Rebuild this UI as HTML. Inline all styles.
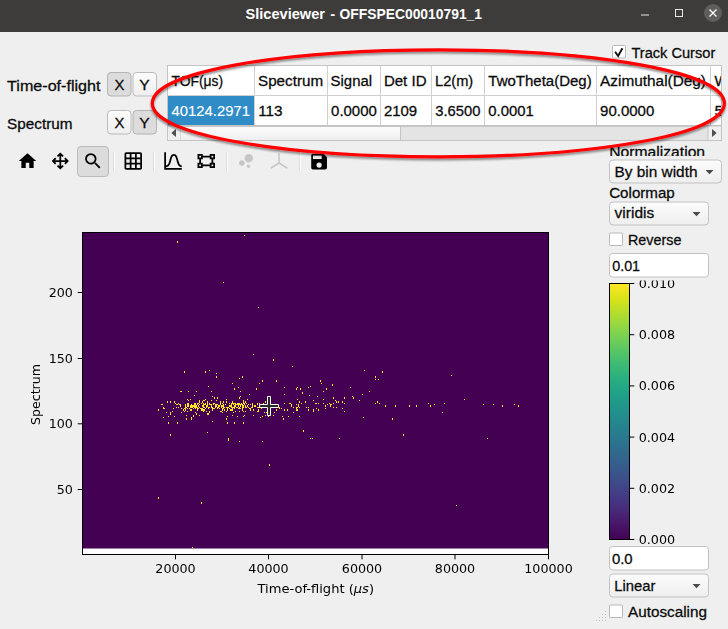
<!DOCTYPE html>
<html lang="en"><head><meta charset="utf-8"><title>Sliceviewer - OFFSPEC00010791_1</title>
<style>
html,body{margin:0;padding:0;background:#efefef;overflow:hidden}
svg{display:block;font-family:"Liberation Sans", sans-serif}
.pl{font-family:"DejaVu Sans", sans-serif}
</style></head><body>
<svg width="728" height="629" viewBox="0 0 728 629">
<defs>
<linearGradient id="vir" x1="0" y1="1" x2="0" y2="0">
<stop offset="0.0000" stop-color="#440154"/>
<stop offset="0.0625" stop-color="#48186a"/>
<stop offset="0.1250" stop-color="#472d7b"/>
<stop offset="0.1875" stop-color="#424086"/>
<stop offset="0.2500" stop-color="#3b528b"/>
<stop offset="0.3125" stop-color="#33638d"/>
<stop offset="0.3750" stop-color="#2c728e"/>
<stop offset="0.4375" stop-color="#26828e"/>
<stop offset="0.5000" stop-color="#21918c"/>
<stop offset="0.5625" stop-color="#1fa088"/>
<stop offset="0.6250" stop-color="#28ae80"/>
<stop offset="0.6875" stop-color="#3fbc73"/>
<stop offset="0.7500" stop-color="#5ec962"/>
<stop offset="0.8125" stop-color="#84d44b"/>
<stop offset="0.8750" stop-color="#addc30"/>
<stop offset="0.9375" stop-color="#d8e219"/>
<stop offset="1.0000" stop-color="#fde725"/>
</linearGradient>
<linearGradient id="btn" x1="0" y1="0" x2="0" y2="1"><stop offset="0" stop-color="#fcfcfc"/><stop offset="1" stop-color="#eeeeee"/></linearGradient>
<filter id="sh" x="-5%" y="-20%" width="110%" height="140%"><feGaussianBlur in="SourceAlpha" stdDeviation="1.2"/><feOffset dx="0" dy="1.5" result="b"/><feComponentTransfer><feFuncA type="linear" slope="0.45"/></feComponentTransfer><feMerge><feMergeNode/><feMergeNode in="SourceGraphic"/></feMerge></filter>
</defs>
<rect width="728" height="629" fill="#efefef"/>
<g id="titlebar">
<rect width="728" height="32" fill="#3d3c3a"/>
<text y="19" font-size="14.67" font-weight="bold" fill="#ffffff"><tspan x="245.5" textLength="79.5" lengthAdjust="spacingAndGlyphs">Sliceviewer</tspan> <tspan x="330.2">-</tspan> <tspan x="339.5" textLength="142.5" lengthAdjust="spacingAndGlyphs">OFFSPEC00010791_1</tspan></text>
<rect x="641" y="14.5" width="8" height="1" fill="#e6e6e6"/>
<rect x="675.5" y="9.5" width="7" height="7" fill="none" stroke="#e6e6e6" stroke-width="1"/>
<circle cx="713" cy="13" r="9" fill="#5f5e5c"/>
<path d="M709.5 9.5 L716.5 16.5 M716.5 9.5 L709.5 16.5" stroke="#ffffff" stroke-width="1.4" fill="none"/>
</g>
<g id="dims">
<text x="7.1" y="90.8" font-size="14.67" fill="#0a0a0a" textLength="93.4" lengthAdjust="spacingAndGlyphs" stroke="#0a0a0a" stroke-width="0.27" >Time-of-flight</text>
<text x="7.1" y="129" font-size="14.67" fill="#0a0a0a" textLength="65.4" lengthAdjust="spacingAndGlyphs" stroke="#0a0a0a" stroke-width="0.27" >Spectrum</text>
<rect x="107.5" y="72.5" width="23.5" height="23.5" rx="3.5" fill="#dcdcdc" stroke="#b4b4b4"/>
<text x="114.6" y="90" font-size="14.67" fill="#0a0a0a" textLength="9.9" lengthAdjust="spacingAndGlyphs" stroke="#0a0a0a" stroke-width="0.27" >X</text>
<rect x="133.0" y="72.5" width="23.5" height="23.5" rx="3.5" fill="url(#btn)" stroke="#bcbcbc"/>
<text x="139.35" y="90" font-size="14.67" fill="#0a0a0a" textLength="10.4" lengthAdjust="spacingAndGlyphs" stroke="#0a0a0a" stroke-width="0.27" >Y</text>
<rect x="107.5" y="110.5" width="23.5" height="23.5" rx="3.5" fill="url(#btn)" stroke="#bcbcbc"/>
<text x="114.6" y="128" font-size="14.67" fill="#0a0a0a" textLength="9.9" lengthAdjust="spacingAndGlyphs" stroke="#0a0a0a" stroke-width="0.27" >X</text>
<rect x="133.0" y="110.5" width="23.5" height="23.5" rx="3.5" fill="#dcdcdc" stroke="#b4b4b4"/>
<text x="139.35" y="128" font-size="14.67" fill="#0a0a0a" textLength="10.4" lengthAdjust="spacingAndGlyphs" stroke="#0a0a0a" stroke-width="0.27" >Y</text>
</g>
<g id="table">
<rect x="167.5" y="65.5" width="554" height="75" fill="#ffffff" stroke="#c4c4c4"/>
<rect x="168" y="96" width="86" height="29" fill="#308cc6"/>
<rect x="254" y="66" width="1" height="59.5" fill="#d0d0d0"/>
<rect x="327" y="66" width="1" height="59.5" fill="#d0d0d0"/>
<rect x="380" y="66" width="1" height="59.5" fill="#d0d0d0"/>
<rect x="431" y="66" width="1" height="59.5" fill="#d0d0d0"/>
<rect x="484" y="66" width="1" height="59.5" fill="#d0d0d0"/>
<rect x="596" y="66" width="1" height="59.5" fill="#d0d0d0"/>
<rect x="710" y="66" width="1" height="59.5" fill="#d0d0d0"/>
<rect x="168" y="95" width="553" height="1" fill="#d0d0d0"/>
<rect x="168" y="125" width="553" height="1" fill="#c4c4c4"/>
<rect x="168" y="126" width="553" height="14" fill="#e4e4e4"/>
<rect x="168" y="126" width="553" height="1" fill="#c8c8c8"/>
<rect x="180.5" y="126.5" width="220" height="14" fill="url(#btn)" stroke="#c4c4c4" stroke-width="1"/>
<rect x="168" y="126.5" width="12.5" height="13.5" fill="#efefef"/>
<rect x="708" y="126.5" width="13" height="13.5" fill="#efefef"/><rect x="707.5" y="126.5" width="1" height="13.5" fill="#c8c8c8"/>
<path d="M171.3 133 L176 129 L176 137 Z" fill="#4e4e4e"/>
<path d="M716.7 133 L712 129 L712 137 Z" fill="#4e4e4e"/>
<text x="171.6" y="86" font-size="14.67" fill="#0a0a0a" textLength="51.5" lengthAdjust="spacingAndGlyphs" stroke="#0a0a0a" stroke-width="0.27" >TOF(μs)</text>
<text x="258.0" y="86" font-size="14.67" fill="#0a0a0a" textLength="65.1" lengthAdjust="spacingAndGlyphs" stroke="#0a0a0a" stroke-width="0.27" >Spectrum</text>
<text x="330.6" y="86" font-size="14.67" fill="#0a0a0a" textLength="41.5" lengthAdjust="spacingAndGlyphs" stroke="#0a0a0a" stroke-width="0.27" >Signal</text>
<text x="383.9" y="86" font-size="14.67" fill="#0a0a0a" textLength="42.6" lengthAdjust="spacingAndGlyphs" stroke="#0a0a0a" stroke-width="0.27" >Det ID</text>
<text x="435.0" y="86" font-size="14.67" fill="#0a0a0a" textLength="38.2" lengthAdjust="spacingAndGlyphs" stroke="#0a0a0a" stroke-width="0.27" >L2(m)</text>
<text x="488.3" y="86" font-size="14.67" fill="#0a0a0a" textLength="103.4" lengthAdjust="spacingAndGlyphs" stroke="#0a0a0a" stroke-width="0.27" >TwoTheta(Deg)</text>
<text x="600.1" y="86" font-size="14.67" fill="#0a0a0a" textLength="105.9" lengthAdjust="spacingAndGlyphs" stroke="#0a0a0a" stroke-width="0.27" >Azimuthal(Deg)</text>
<clipPath id="tclip"><rect x="168" y="66" width="553" height="60"/></clipPath>
<g clip-path="url(#tclip)">
<text x="714.4" y="86" font-size="14.67" fill="#0a0a0a" textLength="13.9" lengthAdjust="spacingAndGlyphs" stroke="#0a0a0a" stroke-width="0.27" >W</text>
<text x="714.4" y="116" font-size="14.67" fill="#0a0a0a" textLength="8.9" lengthAdjust="spacingAndGlyphs" stroke="#0a0a0a" stroke-width="0.27" >5</text>
</g>
<text x="171.6" y="116" font-size="14.67" fill="#ffffff" textLength="78.4" lengthAdjust="spacingAndGlyphs" stroke="#ffffff" stroke-width="0.12" >40124.2971</text>
<text x="258.2" y="116" font-size="14.67" fill="#0a0a0a" textLength="24.3" lengthAdjust="spacingAndGlyphs" stroke="#0a0a0a" stroke-width="0.27" >113</text>
<text x="331.1" y="116" font-size="14.67" fill="#0a0a0a" textLength="45.7" lengthAdjust="spacingAndGlyphs" stroke="#0a0a0a" stroke-width="0.27" >0.0000</text>
<text x="383.9" y="116" font-size="14.67" fill="#0a0a0a" textLength="33.3" lengthAdjust="spacingAndGlyphs" stroke="#0a0a0a" stroke-width="0.27" >2109</text>
<text x="435.3" y="116" font-size="14.67" fill="#0a0a0a" textLength="45.1" lengthAdjust="spacingAndGlyphs" stroke="#0a0a0a" stroke-width="0.27" >3.6500</text>
<text x="488.3" y="116" font-size="14.67" fill="#0a0a0a" textLength="45.5" lengthAdjust="spacingAndGlyphs" stroke="#0a0a0a" stroke-width="0.27" >0.0001</text>
<text x="600.1" y="116" font-size="14.67" fill="#0a0a0a" textLength="54.2" lengthAdjust="spacingAndGlyphs" stroke="#0a0a0a" stroke-width="0.27" >90.0000</text>
</g>
<g id="track">
<rect x="612.5" y="45.5" width="13.0" height="12.5" rx="1" fill="#ffffff" stroke="#b9b9b9"/>
<path d="M615.1 51.8 L618.1 56.0 L622.4 48.2" fill="none" stroke="#111111" stroke-width="1.9"/>
<text x="631.4" y="57.5" font-size="14.67" fill="#0a0a0a" textLength="83.9" lengthAdjust="spacingAndGlyphs" stroke="#0a0a0a" stroke-width="0.27" >Track Cursor</text>
</g>
<g id="toolbar">
<rect x="77.5" y="146.5" width="31" height="30" rx="3.5" fill="#dcdcdc" stroke="#bcbcbc"/>
<rect x="113" y="152" width="1" height="19" fill="#dedede"/><rect x="114" y="152" width="1" height="19" fill="#fdfdfd"/>
<rect x="153" y="152" width="1" height="19" fill="#dedede"/><rect x="154" y="152" width="1" height="19" fill="#fdfdfd"/>
<rect x="226" y="152" width="1" height="19" fill="#dedede"/><rect x="227" y="152" width="1" height="19" fill="#fdfdfd"/>
<rect x="299" y="152" width="1" height="19" fill="#dedede"/><rect x="300" y="152" width="1" height="19" fill="#fdfdfd"/>
<path transform="translate(17.00 150.50) scale(0.875)" fill="#000000" d="M10 20v-6h4v6h5v-8h3L12 3 2 12h3v8z"/>
<path transform="translate(49.80 150.50) scale(0.875)" fill="#000000" d="M13,11H18L16.5,9.5L17.92,8.08L21.84,12L17.92,15.92L16.5,14.5L18,13H13V18L14.5,16.5L15.92,17.92L12,21.84L8.08,17.92L9.5,16.5L11,18V13H6L7.5,14.5L6.08,15.92L2.16,12L6.08,8.08L7.5,9.5L6,11H11V6L9.5,7.5L8.08,6.08L12,2.16L15.92,6.08L14.5,7.5L13,6V11Z"/>
<path transform="translate(82.50 150.50) scale(0.875)" fill="#000000" d="M9.5,3A6.5,6.5 0 0,1 16,9.5C16,11.11 15.41,12.59 14.44,13.73L14.71,14H15.5L20.5,19L19,20.5L14,15.5V14.71L13.73,14.44C12.59,15.41 11.11,16 9.5,16A6.5,6.5 0 0,1 3,9.5A6.5,6.5 0 0,1 9.5,3M9.5,5C7,5 5,7 5,9.5C5,12 7,14 9.5,14C12,14 14,12 14,9.5C14,7 12,5 9.5,5Z"/>
<path transform="translate(122.75 150.50) scale(0.875)" fill="#000000" d="M10,4V8H14V4H10M16,4V8H20V4H16M16,10V14H20V10H16M16,16V20H20V16H16M14,20V16H10V20H14M8,20V16H4V20H8M8,14V10H4V14H8M8,8V4H4V8H8M10,14H14V10H10V14M4,2H20A2,2 0 0,1 22,4V20A2,2 0 0,1 20,22H4C2.92,22 2,21.1 2,20V4A2,2 0 0,1 4,2Z"/>
<path transform="translate(162.50 150.50) scale(0.875)" fill="#000000" d="M9.96,11.31C10.82,8.1 11.5,6 13,6C14.5,6 15.18,8.1 16.04,11.31C17,14.92 18.1,19 22,19V17C19.8,17 19,14.54 17.97,10.8C17.08,7.46 16.15,4 13,4C9.85,4 8.92,7.46 8.03,10.8C7.03,14.54 6.2,17 4,17V2H2V22H22V20H4V19C7.9,19 9,14.92 9.96,11.31Z"/>
<path transform="translate(195.75 150.50) scale(0.875)" fill="#000000" d="M2,4H8V6H16V4H22V10H20V14H22V20H16V18H8V20H2V14H4V10H2V4M16,10V8H8V10H6V14H8V16H16V14H18V10H16M4,6V8H6V6H4M18,6V8H20V6H18M4,16V18H6V16H4M18,16V18H20V16H18Z"/>
<path transform="translate(235.50 150.50) scale(0.875)" fill="#c6c6c6" d="M7.2,11.2C8.97,11.2 10.4,12.63 10.4,14.4C10.4,16.17 8.97,17.6 7.2,17.6C5.43,17.6 4,16.17 4,14.4C4,12.63 5.43,11.2 7.2,11.2M14.8,16A2,2 0 0,1 16.8,18A2,2 0 0,1 14.8,20A2,2 0 0,1 12.8,18A2,2 0 0,1 14.8,16M15.2,4A4.8,4.8 0 0,1 20,8.8C20,11.45 17.85,13.6 15.2,13.6A4.8,4.8 0 0,1 10.4,8.8C10.4,6.15 12.55,4 15.2,4Z"/>
<path d="M279 153 L279 163 M279 163 L270.7 168.2 M279 163 L287.3 168.2" stroke="#c8c8c8" stroke-width="1.6" fill="none"/>
<path transform="translate(308.60 151.00) scale(0.875)" fill="#000000" d="M15,9H5V5H15M12,19A3,3 0 0,1 9,16A3,3 0 0,1 12,13A3,3 0 0,1 15,16A3,3 0 0,1 12,19M17,3H5C3.89,3 3,3.9 3,5V19A2,2 0 0,0 5,21H19A2,2 0 0,0 21,19V7L17,3Z"/>
</g>
<g id="plot" class="pl" style="opacity:.999">
<rect x="82" y="232" width="467" height="323" fill="#ffffff"/>
<rect x="83" y="233" width="465" height="315.5" fill="#440154"/>
<path fill="#fde725" shape-rendering="crispEdges" d="M158 497.24h1v1.31h-1zM158 409.29h1v1.31h-1zM161 404.04h1v1.31h-1zM162 404.04h1v1.31h-1zM163 417.17h1v1.31h-1zM163 407.98h1v1.31h-1zM163 406.66h1v1.31h-1zM164 407.98h1v1.31h-1zM166 411.92h1v1.31h-1zM167 401.41h1v1.31h-1zM168 422.42h1v1.31h-1zM168 415.85h1v1.31h-1zM170 434.23h1v1.31h-1zM170 413.23h1v1.31h-1zM170 411.92h1v1.31h-1zM170 401.41h1v1.31h-1zM172 410.60h1v1.31h-1zM173 407.98h1v1.31h-1zM174 415.85h1v1.31h-1zM174 401.41h1v1.31h-1zM175 402.73h1v1.31h-1zM176 406.66h1v1.31h-1zM176 404.04h1v1.31h-1zM177 422.42h1v1.31h-1zM177 404.04h1v1.31h-1zM177 241.26h1v1.31h-1zM178 406.66h1v1.31h-1zM178 402.73h1v1.31h-1zM179 404.04h1v1.31h-1zM180 405.35h1v1.31h-1zM180 404.04h1v1.31h-1zM180 390.91h1v1.31h-1zM181 411.92h1v1.31h-1zM181 407.98h1v1.31h-1zM181 390.91h1v1.31h-1zM183 409.29h1v1.31h-1zM184 410.60h1v1.31h-1zM184 407.98h1v1.31h-1zM184 371.22h1v1.31h-1zM185 409.29h1v1.31h-1zM185 407.98h1v1.31h-1zM185 406.66h1v1.31h-1zM185 405.35h1v1.31h-1zM185 404.04h1v1.31h-1zM186 418.48h1v1.31h-1zM186 414.54h1v1.31h-1zM186 406.66h1v1.31h-1zM187 410.60h1v1.31h-1zM187 407.98h1v1.31h-1zM187 405.35h1v1.31h-1zM187 404.04h1v1.31h-1zM187 402.73h1v1.31h-1zM187 398.79h1v1.31h-1zM188 405.35h1v1.31h-1zM188 404.04h1v1.31h-1zM188 402.73h1v1.31h-1zM188 400.10h1v1.31h-1zM188 390.91h1v1.31h-1zM189 407.98h1v1.31h-1zM190 409.29h1v1.31h-1zM190 406.66h1v1.31h-1zM190 405.35h1v1.31h-1zM190 398.79h1v1.31h-1zM191 418.48h1v1.31h-1zM191 417.17h1v1.31h-1zM191 409.29h1v1.31h-1zM191 406.66h1v1.31h-1zM191 405.35h1v1.31h-1zM191 404.04h1v1.31h-1zM192 547.12h1v1.31h-1zM192 406.66h1v1.31h-1zM192 405.35h1v1.31h-1zM193 415.85h1v1.31h-1zM193 414.54h1v1.31h-1zM193 407.98h1v1.31h-1zM193 405.35h1v1.31h-1zM194 406.66h1v1.31h-1zM194 405.35h1v1.31h-1zM194 404.04h1v1.31h-1zM194 402.73h1v1.31h-1zM194 394.85h1v1.31h-1zM195 411.92h1v1.31h-1zM195 407.98h1v1.31h-1zM195 406.66h1v1.31h-1zM195 405.35h1v1.31h-1zM195 404.04h1v1.31h-1zM195 402.73h1v1.31h-1zM196 413.23h1v1.31h-1zM196 406.66h1v1.31h-1zM196 405.35h1v1.31h-1zM196 390.91h1v1.31h-1zM197 409.29h1v1.31h-1zM197 407.98h1v1.31h-1zM197 406.66h1v1.31h-1zM197 404.04h1v1.31h-1zM197 402.73h1v1.31h-1zM198 407.98h1v1.31h-1zM198 405.35h1v1.31h-1zM198 402.73h1v1.31h-1zM199 414.54h1v1.31h-1zM199 406.66h1v1.31h-1zM199 404.04h1v1.31h-1zM199 401.41h1v1.31h-1zM199 400.10h1v1.31h-1zM200 407.98h1v1.31h-1zM201 502.49h1v1.31h-1zM201 409.29h1v1.31h-1zM201 407.98h1v1.31h-1zM201 402.73h1v1.31h-1zM202 409.29h1v1.31h-1zM202 407.98h1v1.31h-1zM202 405.35h1v1.31h-1zM202 401.41h1v1.31h-1zM203 410.60h1v1.31h-1zM203 409.29h1v1.31h-1zM203 406.66h1v1.31h-1zM203 405.35h1v1.31h-1zM203 404.04h1v1.31h-1zM203 402.73h1v1.31h-1zM203 400.10h1v1.31h-1zM204 409.29h1v1.31h-1zM204 406.66h1v1.31h-1zM204 404.04h1v1.31h-1zM204 400.10h1v1.31h-1zM205 407.98h1v1.31h-1zM205 404.04h1v1.31h-1zM205 402.73h1v1.31h-1zM205 398.79h1v1.31h-1zM205 371.22h1v1.31h-1zM206 410.60h1v1.31h-1zM206 406.66h1v1.31h-1zM206 405.35h1v1.31h-1zM207 431.61h1v1.31h-1zM207 413.23h1v1.31h-1zM207 405.35h1v1.31h-1zM207 404.04h1v1.31h-1zM207 402.73h1v1.31h-1zM207 401.41h1v1.31h-1zM208 413.23h1v1.31h-1zM208 407.98h1v1.31h-1zM208 406.66h1v1.31h-1zM208 385.66h1v1.31h-1zM209 411.92h1v1.31h-1zM209 410.60h1v1.31h-1zM209 406.66h1v1.31h-1zM209 404.04h1v1.31h-1zM209 402.73h1v1.31h-1zM209 369.91h1v1.31h-1zM210 404.04h1v1.31h-1zM211 406.66h1v1.31h-1zM211 405.35h1v1.31h-1zM211 404.04h1v1.31h-1zM211 400.10h1v1.31h-1zM211 390.91h1v1.31h-1zM212 421.10h1v1.31h-1zM212 409.29h1v1.31h-1zM212 407.98h1v1.31h-1zM212 406.66h1v1.31h-1zM212 396.16h1v1.31h-1zM213 407.98h1v1.31h-1zM213 404.04h1v1.31h-1zM213 402.73h1v1.31h-1zM214 407.98h1v1.31h-1zM214 402.73h1v1.31h-1zM214 397.48h1v1.31h-1zM215 406.66h1v1.31h-1zM215 405.35h1v1.31h-1zM215 404.04h1v1.31h-1zM216 405.35h1v1.31h-1zM216 404.04h1v1.31h-1zM216 400.10h1v1.31h-1zM216 376.47h1v1.31h-1zM216 372.53h1v1.31h-1zM217 407.98h1v1.31h-1zM217 406.66h1v1.31h-1zM217 404.04h1v1.31h-1zM217 397.48h1v1.31h-1zM218 406.66h1v1.31h-1zM218 405.35h1v1.31h-1zM219 407.98h1v1.31h-1zM219 405.35h1v1.31h-1zM220 410.60h1v1.31h-1zM220 404.04h1v1.31h-1zM220 402.73h1v1.31h-1zM220 401.41h1v1.31h-1zM221 410.60h1v1.31h-1zM221 406.66h1v1.31h-1zM221 405.35h1v1.31h-1zM222 411.92h1v1.31h-1zM222 409.29h1v1.31h-1zM222 407.98h1v1.31h-1zM222 405.35h1v1.31h-1zM222 402.73h1v1.31h-1zM223 407.98h1v1.31h-1zM223 406.66h1v1.31h-1zM223 405.35h1v1.31h-1zM223 404.04h1v1.31h-1zM223 401.41h1v1.31h-1zM223 281.96h1v1.31h-1zM224 409.29h1v1.31h-1zM224 406.66h1v1.31h-1zM225 404.04h1v1.31h-1zM226 418.48h1v1.31h-1zM226 410.60h1v1.31h-1zM226 406.66h1v1.31h-1zM226 401.41h1v1.31h-1zM226 398.79h1v1.31h-1zM227 422.42h1v1.31h-1zM227 415.85h1v1.31h-1zM227 409.29h1v1.31h-1zM227 407.98h1v1.31h-1zM227 406.66h1v1.31h-1zM228 439.48h1v1.31h-1zM228 438.17h1v1.31h-1zM228 406.66h1v1.31h-1zM229 407.98h1v1.31h-1zM229 405.35h1v1.31h-1zM229 402.73h1v1.31h-1zM230 409.29h1v1.31h-1zM230 405.35h1v1.31h-1zM231 409.29h1v1.31h-1zM231 406.66h1v1.31h-1zM231 405.35h1v1.31h-1zM231 404.04h1v1.31h-1zM231 402.73h1v1.31h-1zM232 414.54h1v1.31h-1zM232 409.29h1v1.31h-1zM232 407.98h1v1.31h-1zM232 406.66h1v1.31h-1zM232 402.73h1v1.31h-1zM232 401.41h1v1.31h-1zM232 383.04h1v1.31h-1zM233 411.92h1v1.31h-1zM233 406.66h1v1.31h-1zM233 404.04h1v1.31h-1zM233 402.73h1v1.31h-1zM234 422.42h1v1.31h-1zM234 407.98h1v1.31h-1zM234 406.66h1v1.31h-1zM234 405.35h1v1.31h-1zM234 402.73h1v1.31h-1zM234 388.29h1v1.31h-1zM235 410.60h1v1.31h-1zM235 405.35h1v1.31h-1zM235 404.04h1v1.31h-1zM235 402.73h1v1.31h-1zM236 406.66h1v1.31h-1zM236 404.04h1v1.31h-1zM237 415.85h1v1.31h-1zM237 406.66h1v1.31h-1zM237 404.04h1v1.31h-1zM237 402.73h1v1.31h-1zM238 407.98h1v1.31h-1zM238 405.35h1v1.31h-1zM238 404.04h1v1.31h-1zM238 402.73h1v1.31h-1zM238 386.97h1v1.31h-1zM239 440.80h1v1.31h-1zM239 410.60h1v1.31h-1zM239 407.98h1v1.31h-1zM239 406.66h1v1.31h-1zM239 404.04h1v1.31h-1zM239 402.73h1v1.31h-1zM239 397.48h1v1.31h-1zM239 377.79h1v1.31h-1zM240 407.98h1v1.31h-1zM240 405.35h1v1.31h-1zM240 404.04h1v1.31h-1zM240 396.16h1v1.31h-1zM240 390.91h1v1.31h-1zM241 404.04h1v1.31h-1zM241 402.73h1v1.31h-1zM242 409.29h1v1.31h-1zM242 407.98h1v1.31h-1zM242 406.66h1v1.31h-1zM242 405.35h1v1.31h-1zM242 404.04h1v1.31h-1zM242 376.47h1v1.31h-1zM243 422.42h1v1.31h-1zM243 415.85h1v1.31h-1zM243 410.60h1v1.31h-1zM243 406.66h1v1.31h-1zM243 405.35h1v1.31h-1zM243 402.73h1v1.31h-1zM243 401.41h1v1.31h-1zM243 400.10h1v1.31h-1zM244 414.54h1v1.31h-1zM244 404.04h1v1.31h-1zM244 402.73h1v1.31h-1zM244 234.70h1v1.31h-1zM245 410.60h1v1.31h-1zM245 406.66h1v1.31h-1zM245 405.35h1v1.31h-1zM245 401.41h1v1.31h-1zM246 406.66h1v1.31h-1zM246 402.73h1v1.31h-1zM247 405.35h1v1.31h-1zM247 398.79h1v1.31h-1zM248 406.66h1v1.31h-1zM248 404.04h1v1.31h-1zM249 407.98h1v1.31h-1zM249 393.54h1v1.31h-1zM250 409.29h1v1.31h-1zM250 407.98h1v1.31h-1zM250 404.04h1v1.31h-1zM251 406.66h1v1.31h-1zM252 406.66h1v1.31h-1zM252 405.35h1v1.31h-1zM252 404.04h1v1.31h-1zM252 402.73h1v1.31h-1zM253 414.54h1v1.31h-1zM253 409.29h1v1.31h-1zM253 354.16h1v1.31h-1zM254 405.35h1v1.31h-1zM255 405.35h1v1.31h-1zM256 388.29h1v1.31h-1zM257 410.60h1v1.31h-1zM257 406.66h1v1.31h-1zM257 404.04h1v1.31h-1zM257 402.73h1v1.31h-1zM258 410.60h1v1.31h-1zM258 409.29h1v1.31h-1zM258 406.66h1v1.31h-1zM258 306.90h1v1.31h-1zM259 406.66h1v1.31h-1zM259 402.73h1v1.31h-1zM259 383.04h1v1.31h-1zM260 417.17h1v1.31h-1zM261 407.98h1v1.31h-1zM261 405.35h1v1.31h-1zM262 440.80h1v1.31h-1zM262 415.85h1v1.31h-1zM262 406.66h1v1.31h-1zM262 380.41h1v1.31h-1zM263 405.35h1v1.31h-1zM263 404.04h1v1.31h-1zM263 402.73h1v1.31h-1zM264 411.92h1v1.31h-1zM265 414.54h1v1.31h-1zM265 401.41h1v1.31h-1zM266 411.92h1v1.31h-1zM267 398.79h1v1.31h-1zM268 415.85h1v1.31h-1zM268 406.66h1v1.31h-1zM269 464.42h1v1.31h-1zM269 404.04h1v1.31h-1zM269 401.41h1v1.31h-1zM269 398.79h1v1.31h-1zM270 407.98h1v1.31h-1zM270 404.04h1v1.31h-1zM270 401.41h1v1.31h-1zM270 398.79h1v1.31h-1zM273 414.54h1v1.31h-1zM273 359.41h1v1.31h-1zM274 411.92h1v1.31h-1zM276 409.29h1v1.31h-1zM276 404.04h1v1.31h-1zM276 380.41h1v1.31h-1zM277 404.04h1v1.31h-1zM279 407.98h1v1.31h-1zM279 406.66h1v1.31h-1zM281 407.98h1v1.31h-1zM282 415.85h1v1.31h-1zM283 418.48h1v1.31h-1zM284 409.29h1v1.31h-1zM284 402.73h1v1.31h-1zM284 393.54h1v1.31h-1zM284 386.97h1v1.31h-1zM287 409.29h1v1.31h-1zM288 415.85h1v1.31h-1zM289 402.73h1v1.31h-1zM290 402.73h1v1.31h-1zM291 405.35h1v1.31h-1zM291 404.04h1v1.31h-1zM292 365.97h1v1.31h-1zM293 411.92h1v1.31h-1zM293 406.66h1v1.31h-1zM296 409.29h1v1.31h-1zM296 407.98h1v1.31h-1zM296 406.66h1v1.31h-1zM296 404.04h1v1.31h-1zM296 388.29h1v1.31h-1zM297 409.29h1v1.31h-1zM297 406.66h1v1.31h-1zM297 398.79h1v1.31h-1zM297 386.97h1v1.31h-1zM298 405.35h1v1.31h-1zM298 404.04h1v1.31h-1zM299 415.85h1v1.31h-1zM299 406.66h1v1.31h-1zM299 401.41h1v1.31h-1zM300 388.29h1v1.31h-1zM301 402.73h1v1.31h-1zM302 392.23h1v1.31h-1zM303 430.29h1v1.31h-1zM305 401.41h1v1.31h-1zM306 406.66h1v1.31h-1zM308 409.29h1v1.31h-1zM308 406.66h1v1.31h-1zM308 386.97h1v1.31h-1zM309 394.85h1v1.31h-1zM310 438.17h1v1.31h-1zM310 385.66h1v1.31h-1zM312 438.17h1v1.31h-1zM313 410.60h1v1.31h-1zM313 409.29h1v1.31h-1zM313 400.10h1v1.31h-1zM315 402.73h1v1.31h-1zM316 407.98h1v1.31h-1zM316 402.73h1v1.31h-1zM317 396.16h1v1.31h-1zM318 409.29h1v1.31h-1zM318 402.73h1v1.31h-1zM320 380.41h1v1.31h-1zM321 383.04h1v1.31h-1zM323 402.73h1v1.31h-1zM323 398.79h1v1.31h-1zM323 390.91h1v1.31h-1zM325 407.98h1v1.31h-1zM325 405.35h1v1.31h-1zM326 388.29h1v1.31h-1zM327 404.04h1v1.31h-1zM329 402.73h1v1.31h-1zM330 405.35h1v1.31h-1zM330 404.04h1v1.31h-1zM331 404.04h1v1.31h-1zM332 384.35h1v1.31h-1zM333 406.66h1v1.31h-1zM333 402.73h1v1.31h-1zM333 397.48h1v1.31h-1zM335 400.10h1v1.31h-1zM336 406.66h1v1.31h-1zM336 401.41h1v1.31h-1zM338 401.41h1v1.31h-1zM339 438.17h1v1.31h-1zM342 407.98h1v1.31h-1zM342 401.41h1v1.31h-1zM344 410.60h1v1.31h-1zM344 402.73h1v1.31h-1zM344 397.48h1v1.31h-1zM350 386.97h1v1.31h-1zM352 396.16h1v1.31h-1zM353 397.48h1v1.31h-1zM359 400.10h1v1.31h-1zM362 393.54h1v1.31h-1zM363 417.17h1v1.31h-1zM364 369.91h1v1.31h-1zM369 390.91h1v1.31h-1zM375 402.73h1v1.31h-1zM375 379.10h1v1.31h-1zM375 376.47h1v1.31h-1zM377 401.41h1v1.31h-1zM378 379.10h1v1.31h-1zM379 402.73h1v1.31h-1zM382 371.22h1v1.31h-1zM385 405.35h1v1.31h-1zM392 418.48h1v1.31h-1zM395 405.35h1v1.31h-1zM403 434.23h1v1.31h-1zM409 405.35h1v1.31h-1zM416 405.35h1v1.31h-1zM428 402.73h1v1.31h-1zM430 405.35h1v1.31h-1zM434 404.04h1v1.31h-1zM442 411.92h1v1.31h-1zM444 402.73h1v1.31h-1zM451 375.16h1v1.31h-1zM456 505.12h1v1.31h-1zM464 398.79h1v1.31h-1zM483 404.04h1v1.31h-1zM487 438.17h1v1.31h-1zM493 404.04h1v1.31h-1zM502 405.35h1v1.31h-1zM514 404.04h1v1.31h-1zM518 405.35h1v1.31h-1z"/>
<path d="M259.5 404.5h8v-8h3v8h8v3h-8v8h-3v-8h-8z" fill="#2a2a2a" stroke="#ffffff" stroke-width="1"/>
<rect x="82.5" y="232.5" width="466" height="322" fill="none" stroke="#000000" stroke-width="1"/>
<rect x="175.0" y="555" width="1" height="4.3" fill="#000"/>
<text x="175.5" y="573" font-size="12.7" fill="#000" text-anchor="middle" >20000</text>
<rect x="268.0" y="555" width="1" height="4.3" fill="#000"/>
<text x="268.5" y="573" font-size="12.7" fill="#000" text-anchor="middle" >40000</text>
<rect x="361.5" y="555" width="1" height="4.3" fill="#000"/>
<text x="362" y="573" font-size="12.7" fill="#000" text-anchor="middle" >60000</text>
<rect x="454.5" y="555" width="1" height="4.3" fill="#000"/>
<text x="455" y="573" font-size="12.7" fill="#000" text-anchor="middle" >80000</text>
<rect x="548.0" y="555" width="1" height="4.3" fill="#000"/>
<text x="548.5" y="573" font-size="12.7" fill="#000" text-anchor="middle" >100000</text>
<rect x="77.7" y="489.0" width="4.3" height="1" fill="#000"/>
<text x="72.9" y="494.1" font-size="12.7" fill="#000" text-anchor="end" >50</text>
<rect x="77.7" y="423.3" width="4.3" height="1" fill="#000"/>
<text x="72.9" y="428.40000000000003" font-size="12.7" fill="#000" text-anchor="end" >100</text>
<rect x="77.7" y="358.0" width="4.3" height="1" fill="#000"/>
<text x="72.9" y="363.1" font-size="12.7" fill="#000" text-anchor="end" >150</text>
<rect x="77.7" y="292.0" width="4.3" height="1" fill="#000"/>
<text x="72.9" y="297.1" font-size="12.7" fill="#000" text-anchor="end" >200</text>
<text x="315.75" y="593" font-size="12.7" fill="#000" text-anchor="middle" textLength="116.5" lengthAdjust="spacingAndGlyphs">Time-of-flight (<tspan font-style="italic">μs</tspan>)</text>
<text transform="translate(40.3 394.5) rotate(-90)" font-size="12.7" fill="#000" text-anchor="middle" textLength="61" lengthAdjust="spacingAndGlyphs">Spectrum</text>
</g>
<g id="panel">
<clipPath id="nclip"><rect x="600" y="140" width="128" height="15.9"/></clipPath><g clip-path="url(#nclip)">
<text x="609.2" y="157.2" font-size="14.67" fill="#0a0a0a" textLength="95.9" lengthAdjust="spacingAndGlyphs" stroke="#0a0a0a" stroke-width="0.27" >Normalization</text>
</g>
<rect x="609.5" y="160.0" width="112" height="23" rx="3.5" fill="url(#btn)" stroke="#c2c2c2"/>
<text x="614.6" y="177" font-size="14.67" fill="#0a0a0a" textLength="82.9" lengthAdjust="spacingAndGlyphs" stroke="#0a0a0a" stroke-width="0.27" >By bin width</text>
<path d="M705.5 170.0 L713.5 170.0 L709.5 174.2 Z" fill="#4a4a4a"/>
<text x="609.2" y="198.0" font-size="14.67" fill="#0a0a0a" textLength="65.6" lengthAdjust="spacingAndGlyphs" stroke="#0a0a0a" stroke-width="0.27" >Colormap</text>
<rect x="609.5" y="202.0" width="99" height="23" rx="3.5" fill="url(#btn)" stroke="#c2c2c2"/>
<text x="614.6" y="218.2" font-size="14.67" fill="#0a0a0a" textLength="39.6" lengthAdjust="spacingAndGlyphs" stroke="#0a0a0a" stroke-width="0.27" >viridis</text>
<path d="M692.5 212.0 L700.5 212.0 L696.5 216.2 Z" fill="#4a4a4a"/>
<rect x="609.5" y="233.0" width="13.0" height="12.5" rx="1" fill="#ffffff" stroke="#b9b9b9"/>
<text x="628.0" y="244.8" font-size="14.67" fill="#0a0a0a" textLength="53.4" lengthAdjust="spacingAndGlyphs" stroke="#0a0a0a" stroke-width="0.27" >Reverse</text>
<rect x="609.5" y="253.5" width="99" height="23.5" rx="3" fill="#ffffff" stroke="#c2c2c2"/>
<text x="612.2" y="270.8" font-size="14.67" fill="#0a0a0a" textLength="27.9" lengthAdjust="spacingAndGlyphs" stroke="#0a0a0a" stroke-width="0.27" >0.01</text>
<g class="pl" style="opacity:.999">
<clipPath id="cbclip"><rect x="600" y="280.5" width="128" height="264"/></clipPath><g clip-path="url(#cbclip)">
<rect x="609.5" y="283.5" width="20" height="256" fill="url(#vir)" stroke="#000" stroke-width="1"/>
<rect x="630" y="539.00" width="4.3" height="1" fill="#000"/>
<text x="638.7" y="543.9" font-size="12.5" fill="#000" textLength="36.5" lengthAdjust="spacingAndGlyphs" >0.000</text>
<rect x="630" y="487.80" width="4.3" height="1" fill="#000"/>
<text x="638.7" y="492.7" font-size="12.5" fill="#000" textLength="36.5" lengthAdjust="spacingAndGlyphs" >0.002</text>
<rect x="630" y="436.60" width="4.3" height="1" fill="#000"/>
<text x="638.7" y="441.5" font-size="12.5" fill="#000" textLength="36.5" lengthAdjust="spacingAndGlyphs" >0.004</text>
<rect x="630" y="385.40" width="4.3" height="1" fill="#000"/>
<text x="638.7" y="390.3" font-size="12.5" fill="#000" textLength="36.5" lengthAdjust="spacingAndGlyphs" >0.006</text>
<rect x="630" y="334.20" width="4.3" height="1" fill="#000"/>
<text x="638.7" y="339.1" font-size="12.5" fill="#000" textLength="36.5" lengthAdjust="spacingAndGlyphs" >0.008</text>
<rect x="630" y="283.00" width="4.3" height="1" fill="#000"/>
<text x="638.7" y="287.9" font-size="12.5" fill="#000" textLength="36.5" lengthAdjust="spacingAndGlyphs" >0.010</text>
</g></g>
<rect x="609.5" y="546.5" width="99" height="23.5" rx="3" fill="#ffffff" stroke="#c2c2c2"/>
<text x="611.9" y="563.8" font-size="14.67" fill="#0a0a0a" textLength="20.7" lengthAdjust="spacingAndGlyphs" stroke="#0a0a0a" stroke-width="0.27" >0.0</text>
<rect x="609.5" y="574.0" width="99" height="23" rx="3.5" fill="url(#btn)" stroke="#c2c2c2"/>
<text x="614.3" y="590.8" font-size="14.67" fill="#0a0a0a" textLength="41.2" lengthAdjust="spacingAndGlyphs" stroke="#0a0a0a" stroke-width="0.27" >Linear</text>
<path d="M692.5 584.0 L700.5 584.0 L696.5 588.2 Z" fill="#4a4a4a"/>
<rect x="609.5" y="605.0" width="13.0" height="12.5" rx="1" fill="#ffffff" stroke="#b9b9b9"/>
<text x="628.1" y="616.5" font-size="14.67" fill="#0a0a0a" textLength="78.9" lengthAdjust="spacingAndGlyphs" stroke="#0a0a0a" stroke-width="0.27" >Autoscaling</text>
<rect x="605" y="611" width="1" height="1" fill="#bebebe"/>
<rect x="605" y="614" width="1" height="1" fill="#bebebe"/>
<rect x="602" y="614" width="1" height="1" fill="#bebebe"/>
<rect x="605" y="617" width="1" height="1" fill="#bebebe"/>
<rect x="602" y="617" width="1" height="1" fill="#bebebe"/>
<rect x="599" y="617" width="1" height="1" fill="#bebebe"/>
<rect x="605" y="620" width="1" height="1" fill="#bebebe"/>
<rect x="602" y="620" width="1" height="1" fill="#bebebe"/>
<rect x="599" y="620" width="1" height="1" fill="#bebebe"/>
<rect x="596" y="620" width="1" height="1" fill="#bebebe"/>
</g>
<path d="M152.3 103.3 C152.3 72.00 280.51 49.8 438.5 49.8 C596.49 49.8 724.4 72.00 724.4 103.3 C724.4 134.60 596.49 156.8 438.5 156.8 C280.51 156.8 152.3 134.60 152.3 103.3Z" fill="none" stroke="#ff0000" stroke-width="3.2" filter="url(#sh)"/>
</svg></body></html>
